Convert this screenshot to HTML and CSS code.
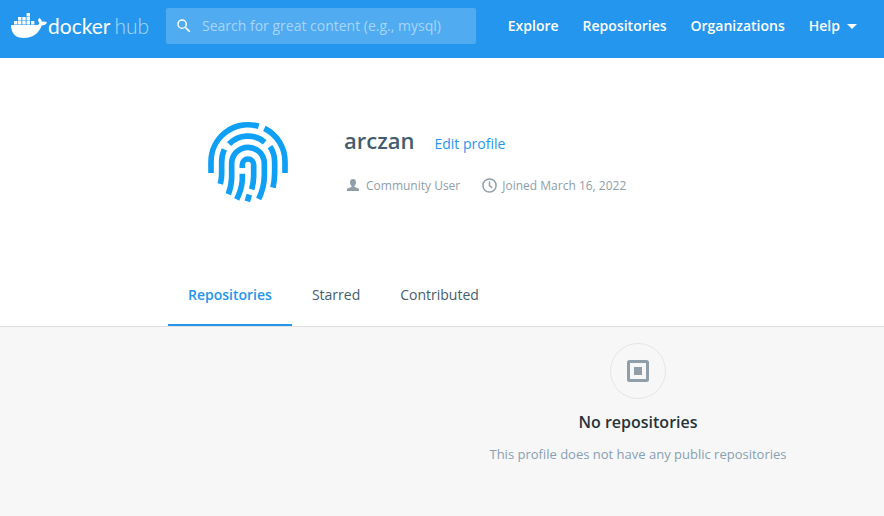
FILE: index.html
```html
<!DOCTYPE html>
<html lang="en">
<head>
<meta charset="utf-8">
<title>arczan - Docker Hub</title>
<link rel="stylesheet" href="styles.css">
</head>
<body>
<header class="topbar">
  <a class="brand" href="#">
    <svg class="whale" viewBox="0 0 37 27" aria-hidden="true">
      <path d="M0 12H25C27 12 28.500 11.500 28.300 10C26.600 8 26.900 6.200 28.300 5C29.900 6 30.800 7.300 31 8.800C33 8.300 34.800 8.600 36 9.500C35.200 11.500 33.300 12.500 30.700 12.600C28 20 22.300 25 13 25C4.500 25 0 20.500 0 12Z"/>
      <path d="M3 8h3.400v3.400H3zM7 8h3.400v3.400H7zM11.300 8h3.400v3.400h-3.400zM15.600 8H19v3.400h-3.400zM20 8h3.400v3.400H20zM7 4h3.400v3.400H7zM11.300 4h3.400v3.400h-3.400zM15.600 4H19v3.400h-3.400zM15.600 0H19v3.400h-3.400z"/>
    </svg>
    <span class="word">docker</span><span class="word word-light">hub</span>
  </a>
  <form class="search">
    <svg class="search-icon" viewBox="0 0 24 24" aria-hidden="true"><path d="M15.500 14h-.79l-.28-.27A6.470 6.470 0 0 0 16 9.500 6.500 6.500 0 1 0 9.500 16c1.610 0 3.090-.59 4.230-1.570l.27.28v.79l5 4.990L20.490 19l-4.990-5zM9.500 14a4.500 4.500 0 1 1 0-9 4.500 4.500 0 0 1 0 9z"/></svg>
    <input class="search-input" type="search" aria-label="Search" placeholder="Search for great content (e.g., mysql)">
  </form>
  <nav class="nav">
    <a href="#">Explore</a>
    <a href="#">Repositories</a>
    <a href="#">Organizations</a>
    <button class="help" type="button">Help <svg class="caret" viewBox="0 0 10 5" aria-hidden="true"><path d="M0 0H10L5 5Z"/></svg></button>
  </nav>
</header>
<main>
  <section class="profile">
    <svg class="avatar" viewBox="0 0 300 300" role="img" aria-label="Fingerprint avatar">
      <path d="M39 183V149A111 111 0 0 1 182 43M199 49A111 111 0 0 1 261 149V183"/>
      <path d="M93 96A78 78 0 0 1 200 91M79 112Q71 129 71 151V185Q71 200 67 216M216 104Q230 124 230 150V180Q230 204 225 227"/>
      <path d="M91 247Q101 220 101 195V155A49 49 0 0 1 199 155V190Q199 226 182 261"/>
      <path d="M133 168V158A17 17 0 0 1 167 158V192Q167 212 161 232M133 185V205Q130 236 116 262M154 248L148 268"/>
    </svg>
    <div class="details">
      <div class="title-row">
        <h1 class="name">arczan</h1>
        <a class="edit" href="#">Edit profile</a>
      </div>
      <ul class="meta">
        <li><svg class="user-icon" viewBox="0 0 12 12" aria-hidden="true"><path d="M6 0C8 0 9 1.300 9 3.200C9 5 8.300 6 7.500 6.700V8L11 9.300C11.700 9.600 12 10 12 10.800V12H0V10.800C0 10 .3 9.600 1 9.300L4.500 8V6.700C3.700 6 3 5 3 3.200C3 1.300 4 0 6 0Z"/></svg>Community User</li>
        <li><svg class="clock-icon" viewBox="0 0 15 15" aria-hidden="true"><circle cx="7.500" cy="7.500" r="6.600"/><path d="M7.500 3.500V7.800L10.300 9.600"/></svg>Joined March 16, 2022</li>
      </ul>
    </div>
  </section>
  <nav class="tabs">
    <a class="tab active" href="#">Repositories</a>
    <a class="tab" href="#">Starred</a>
    <a class="tab" href="#">Contributed</a>
  </nav>
  <section class="empty">
    <div class="empty-icon"><svg viewBox="0 0 22 22" aria-hidden="true"><rect class="frame" x="1.500" y="1.500" width="19" height="19" rx="1"/><rect class="core" x="7" y="7" width="8" height="8"/></svg></div>
    <h2 class="empty-title">No repositories</h2>
    <p class="empty-text">This profile does not have any public repositories</p>
  </section>
</main>
</body>
</html>
```
FILE: styles.css
```css
* { box-sizing: border-box; }
body {
  margin: 0;
  background: #f7f7f7;
  font-family: "Open Sans", sans-serif;
  font-size: 14px;
  line-height: 20px;
  color: #445d6e;
}
a { color: inherit; text-decoration: none; }
.topbar {
  display: flex;
  align-items: center;
  height: 58px;
  padding: 0 27px 6px 11px;
  background: #2496ed;
  color: #fff;
}
.brand { display: flex; align-items: center; flex: 0 0 155px; }
.whale { width: 37px; height: 27px; fill: #fff; }
.word { font-family: Lato, sans-serif; font-size: 21px; line-height: 24px; }
.word-light { margin-left: 4px; font-weight: 300; opacity: .6; }
.search {
  display: flex;
  align-items: center;
  flex: 0 1 310px;
  height: 36px;
  padding-left: 9px;
  border-radius: 2px;
  background: #50abf1;
}
.search-icon { width: 18px; height: 18px; fill: #fff; }
.search-input {
  flex: 1;
  min-width: 0;
  height: 36px;
  padding: 0 9px 2px;
  border: 0;
  background: transparent;
  color: #fff;
  font: inherit;
}
.search-input::placeholder { color: #a7d5f8; opacity: 1; }
.nav { display: flex; gap: 24px; margin-left: auto; font-weight: 600; }
.help {
  display: flex;
  align-items: center;
  gap: 7px;
  padding: 0;
  border: 0;
  background: none;
  color: inherit;
  font: inherit;
}
.caret { width: 10px; height: 5px; fill: #fff; }
.profile {
  display: flex;
  gap: 46px;
  padding: 54px 24px 52px 198px;
  background: #fff;
}
.avatar { flex: none; width: 100px; height: 100px; fill: none; stroke: #0f9ff4; stroke-width: 17px; }
.details { padding-top: 12px; }
.title-row { display: flex; align-items: baseline; gap: 20px; }
.name { margin: 0; font-size: 22px; line-height: 32px; font-weight: 600; }
.edit { color: #2496ed; }
.meta {
  display: flex;
  gap: 22px;
  margin: 20px 0 0;
  padding: 0;
  list-style: none;
  color: #8f9ea8;
  font-size: 12px;
}
.meta li { display: flex; align-items: center; }
.user-icon { width: 12px; height: 12px; margin: 0 7px 2px 3px; fill: #8f9ea8; }
.clock-icon { width: 15px; height: 15px; margin: 0 5px 2px 0; fill: none; stroke: #8f9ea8; stroke-width: 1.5px; }
.tabs {
  display: flex;
  padding: 0 24px 0 168px;
  border-bottom: 1px solid #e0e0e0;
  background: #fff;
}
.tab { padding: 21px 20px; }
.tab.active { padding-bottom: 19px; border-bottom: 2px solid #2496ed; color: #2496ed; font-weight: 600; }
.empty {
  display: flex;
  flex-direction: column;
  align-items: center;
  padding: 16px 0 48px 392px;
  text-align: center;
}
.empty-icon {
  display: flex;
  align-items: center;
  justify-content: center;
  width: 56px;
  height: 56px;
  border: 1px solid #e3e5e7;
  border-radius: 50%;
}
.empty-icon svg { width: 22px; height: 22px; }
.frame { fill: none; stroke: #8f9ea8; stroke-width: 3px; }
.core { fill: #8f9ea8; }
.empty-title { margin: 11px 0 0; font-size: 16px; line-height: 24px; font-weight: 600; color: #27343b; }
.empty-text { margin: 10px 0 0; font-size: 13px; color: #88a0b2; }
```
